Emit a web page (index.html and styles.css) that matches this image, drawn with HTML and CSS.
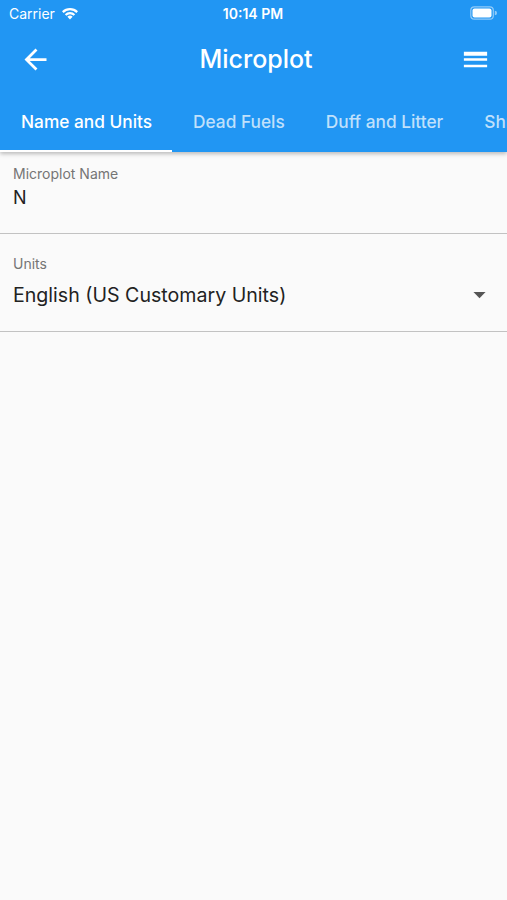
FILE: index.html
```html
<!DOCTYPE html>
<html lang="en">
<head>
  <meta charset="UTF-8">
  <meta name="viewport" content="width=device-width, initial-scale=1.0">
  <title>Microplot</title>
  <link rel="stylesheet" href="styles.css">
</head>
<body>
  <div class="app-bar">
    <div class="status-bar">
      <div class="status-left">
        <span>Carrier</span>
        <svg class="wifi" width="18" height="14" viewBox="0 0 18 14">
          <path d="M9 13.5l-2.6-2.7a3.7 3.7 0 0 1 5.2 0z" fill="#fff"/>
          <path d="M4.6 9a6.2 6.2 0 0 1 8.8 0" stroke="#fff" stroke-width="2.2" fill="none"/>
          <path d="M1.8 6.1a10.2 10.2 0 0 1 14.4 0" stroke="#fff" stroke-width="2.2" fill="none"/>
        </svg>
      </div>
      <div class="status-time">10:14 PM</div>
      <div class="status-right">
        <svg width="27" height="14" viewBox="0 0 27 14">
          <rect x="0.8" y="0.8" width="22.5" height="12.4" rx="3.5" fill="none" stroke="rgba(255,255,255,0.5)" stroke-width="1.2"/>
          <rect x="2.5" y="2.5" width="19" height="9" rx="2" fill="#fff"/>
          <path d="M24.8 4.8v4.4a2.2 2.2 0 0 0 0-4.4z" fill="rgba(255,255,255,0.5)"/>
        </svg>
      </div>
    </div>

    <div class="toolbar">
      <svg class="icon" width="33" height="33" viewBox="0 0 24 24">
        <path d="M20 11H7.83l5.59-5.59L12 4l-8 8 8 8 1.41-1.41L7.83 13H20v-2z" fill="#fff"/>
      </svg>
      <h1 class="title">Microplot</h1>
      <svg class="icon" width="31" height="31" viewBox="0 0 24 24">
        <path d="M3 18h18v-2H3v2zm0-5h18v-2H3v2zm0-6v2h18V6H3z" fill="#fff"/>
      </svg>
    </div>

    <div class="tabs">
      <div class="tab active">Name and Units</div>
      <div class="tab">Dead Fuels</div>
      <div class="tab">Duff and Litter</div>
      <div class="tab">Shrubs</div>
    </div>
  </div>

  <div class="content">
    <div class="field">
      <div class="field-label">Microplot Name</div>
      <div class="field-value">N</div>
    </div>
    <div class="field field-units">
      <div class="field-label">Units</div>
      <div class="field-row">
        <div class="field-value">English (US Customary Units)</div>
        <svg width="29" height="29" viewBox="0 0 24 24">
          <path d="M7 10l5 5 5-5z" fill="#555"/>
        </svg>
      </div>
    </div>
  </div>
</body>
</html>
```

FILE: styles.css
```css
body {
  margin: 0;
  height: 900px;
  background-color: #fafafa;
  font-family: Inter, Roboto, 'Noto Sans', sans-serif;
  overflow: hidden;
}
.app-bar {
  background-color: #2196F3;
  color: white;
  box-shadow: 0 2px 4px rgba(0,0,0,0.25);
  position: relative;
}
.status-bar {
  height: 26px;
  display: flex;
  align-items: center;
  justify-content: space-between;
  padding: 0 10px 0 9px;
  font-size: 14px;
}
.status-left {
  display: flex;
  align-items: center;
  gap: 6px;
  width: 120px;
}
.status-time {
  font-weight: 600;
}
.status-right {
  width: 120px;
  display: flex;
  justify-content: flex-end;
}
.toolbar {
  height: 66px;
  display: flex;
  align-items: center;
  justify-content: space-between;
  padding: 0 16px 0 19px;
}
.title {
  margin: 0;
  font-size: 25px;
  font-weight: 500;
}
.tabs {
  height: 60px;
  display: flex;
  white-space: nowrap;
  overflow: hidden;
}
.tab {
  padding: 0 20px 0 21px;
  display: flex;
  align-items: center;
  font-size: 17.3px;
  font-weight: 500;
  color: rgba(255,255,255,0.72);
  border-bottom: 2px solid transparent;
  box-sizing: border-box;
}
.tab.active {
  color: white;
  border-bottom-color: white;
}
.content {
  display: flex;
  flex-direction: column;
}
.field {
  padding: 13px 13px 0;
  height: 82px;
  box-sizing: border-box;
  border-bottom: 1px solid #c2c2c2;
}
.field-units {
  height: 98px;
  padding-top: 21px;
}
.field-label {
  font-size: 14px;
  color: #757575;
  line-height: 17px;
}
.field-value {
  font-size: 18px;
  color: #222;
  line-height: 24px;
  margin-top: 4px;
}
.field-units .field-value {
  font-size: 19.6px;
  margin-top: 0;
}
.field-row {
  display: flex;
  align-items: center;
  justify-content: space-between;
  margin-top: 8px;
  padding-right: 6px;
  margin-right: -6px;
}
```
